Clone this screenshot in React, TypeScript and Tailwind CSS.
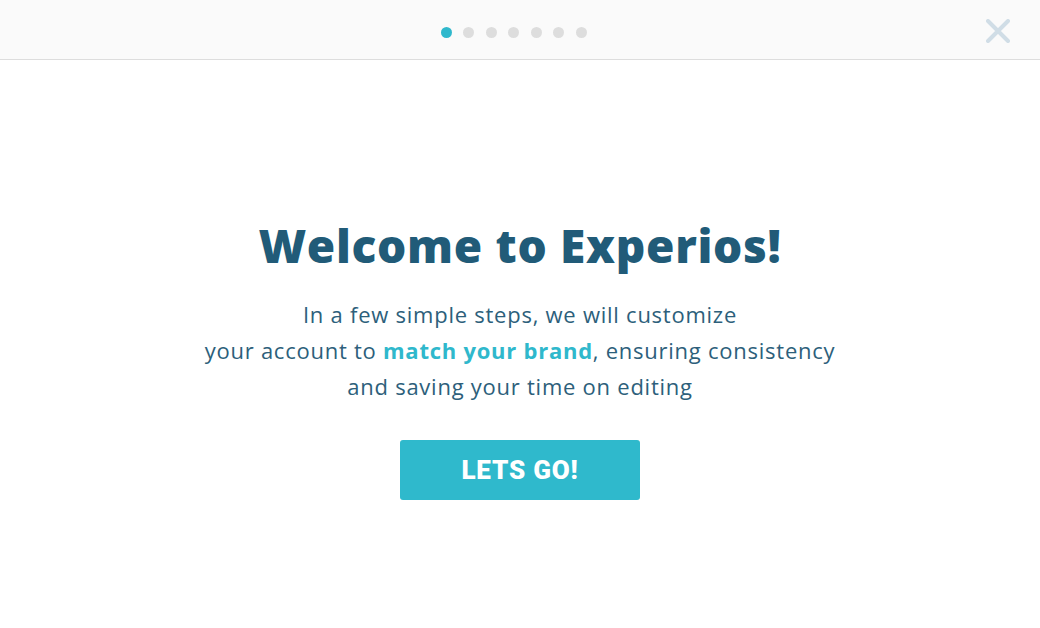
import React from "react";

export default function App() {
  const dots = [0, 1, 2, 3, 4, 5, 6];
  return (
    <div className="w-[1040px] h-[628px] bg-white flex flex-col overflow-hidden">
      <div className="relative h-[60px] bg-[#fafafa] border-b border-[#dddddd] flex items-center justify-center shrink-0">
        <div className="flex items-center gap-[11.5px] mt-[6px] ml-[-13px]">
          {dots.map((i) => (
            <span
              key={i}
              className={
                i === 0
                  ? "w-[11px] h-[11px] rounded-full bg-[#2fb8cc]"
                  : "w-[11px] h-[11px] rounded-full bg-[#dddddd]"
              }
            />
          ))}
        </div>
        <button className="absolute right-[30px] top-[19px] w-[24px] h-[24px]">
          <svg viewBox="0 0 24 24" width="24" height="24">
            <path d="M2 2 L22 22 M22 2 L2 22" stroke="#d0dde6" strokeWidth="4" strokeLinecap="round" />
          </svg>
        </button>
      </div>
      <div className="flex-1 flex flex-col items-center pt-[157px]">
        <h1 className="font-['Open_Sans',sans-serif] font-extrabold text-[46px] leading-[56px] text-[#215b78] tracking-[0.7px]">
          Welcome to Experios!
        </h1>
        <p className="mt-[23px] font-['Open_Sans',sans-serif] text-[22px] leading-[36px] text-[#2d5f7b] text-center tracking-[0.75px]">
          In a few simple steps, we will customize
          <br />
          your account to <span className="font-bold text-[#2fb8cc]">match your brand</span>, ensuring consistency
          <br />
          and saving your time on editing
        </p>
        <button className="mt-[36px] w-[240px] h-[60px] rounded-[3px] bg-[#2fb9cc] text-white font-['Roboto',sans-serif] font-black text-[26px] tracking-[0.8px]">
          LETS GO!
        </button>
      </div>
    </div>
  );
}
